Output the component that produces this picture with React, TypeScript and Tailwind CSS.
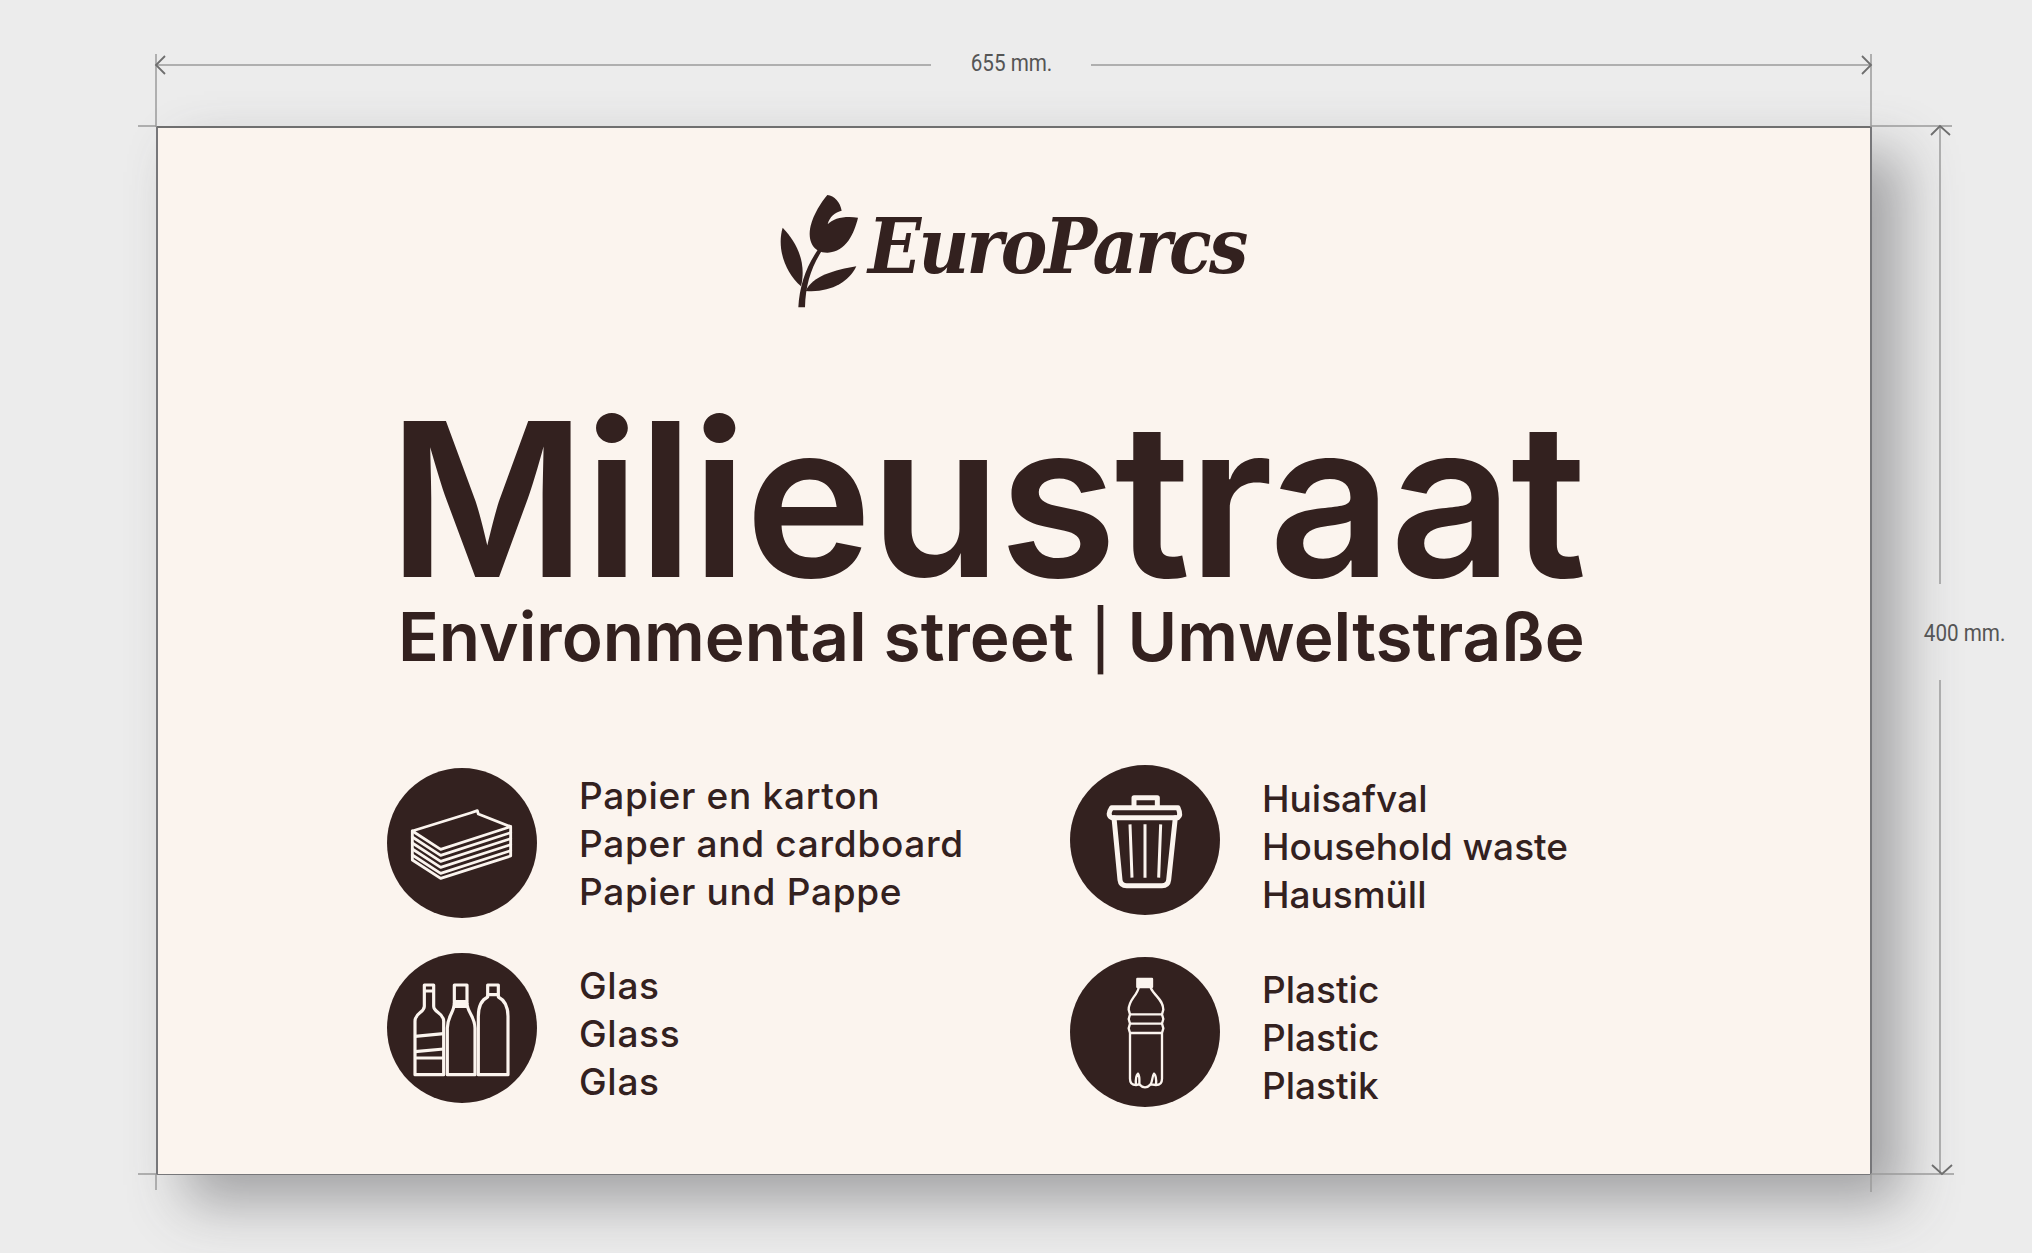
const cream = "#fbf4ee";

function PaperIcon() {
	return (
		<svg viewBox="0 0 450 450" className="h-full w-full" fill="none" stroke={cream} strokeWidth="8.5" strokeLinejoin="round" strokeLinecap="round">
			<path d="M76 189 L250 135 L271 128 L274 138 L371 176 L161 244 Z" />
			<path d="M76 189 V276 L161 331 L371 264 V176" />
			<path d="M76 207 L161 262 L371 194" />
			<path d="M76 225 L161 280 L371 212" />
			<path d="M76 243 L161 298 L371 230" />
			<path d="M76 261 L161 316 L371 248" />
		</svg>
	);
}

function GlassIcon() {
	return (
		<svg viewBox="0 0 450 450" className="h-full w-full" fill="none" stroke={cream} strokeWidth="9.5" strokeLinejoin="round">
			<path d="M112 96 H140 V114 H112 Z M112 114 V160 C112 180 84 178 84 205 V365 H170 V205 C170 178 140 180 140 160 V114" />
			<path d="M84 250 L170 242 M84 296 L170 288 M84 315 H170" />
			<path d="M202 96 H240 V150 H202 Z" />
			<path d="M204 146 H238 V160 H204 Z" fill={cream} />
			<path d="M202 150 C202 178 181 190 181 225 V365 H264 V225 C264 190 240 178 240 150" />
			<path d="M302 96 H334 V125 H302 Z" />
			<path d="M302 125 V132 C285 140 274 155 274 190 V365 H363 V190 C363 155 350 140 334 132 V125" />
		</svg>
	);
}

function TrashIcon() {
	return (
		<svg viewBox="0 0 450 450" className="h-full w-full" fill="none" stroke={cream} strokeLinejoin="round" strokeLinecap="round">
			<path d="M132 158 L150 345 Q152 362 170 362 H276 Q294 362 296 345 L316 158" strokeWidth="15" />
			<path d="M125 128 H324 Q334 150 324 158 H125 Q110 150 125 128 Z" strokeWidth="15" />
			<path d="M192 122 V98 H262 V122" strokeWidth="15" />
			<path d="M180 178 L186 338 M225 178 V338 M272 178 L266 338" strokeWidth="9" strokeLinecap="butt" />
		</svg>
	);
}

function BottleIcon() {
	return (
		<svg viewBox="0 0 450 450" className="h-full w-full" fill="none" stroke={cream} strokeWidth="7" strokeLinejoin="round">
			<path d="M202 66 H246 V90 H202 Z" fill={cream} />
			<path d="M206 92 C200 118 176 128 176 158 L180 172 L176 186 L180 200 L176 214 L180 228 V365 Q180 384 198 384 L208 382 Q225 400 242 382 L258 384 Q276 384 276 365 V228 L280 214 L276 200 L280 186 L276 172 L280 158 C280 128 254 118 242 92" />
			<path d="M178 172 H278 M178 200 H278 M180 228 H276" />
			<path d="M198 384 C196 365 200 354 204 350 C210 358 208 372 208 382 M258 384 C260 365 256 354 252 350 C246 358 248 372 242 382" />
		</svg>
	);
}

function Tulip() {
	return (
		<svg viewBox="110 75 240 345" className="h-[115px] w-[80px]" fill="#33211f">
			<path d="M255 78 C276 80 294 100 298 125 C278 130 262 142 256 166 C272 147 310 140 347 146 C336 192 312 248 256 251 C214 252 194 216 205 170 C214 136 236 100 255 78 Z" />
			<path d="M168 415 C172 350 190 295 228 240 L238 246 C204 300 190 350 188 415 Z" />
			<path d="M121 176 C168 225 192 285 176 352 C130 312 102 240 121 176 Z" />
			<path d="M342 292 C320 340 262 372 190 366 C210 322 278 302 342 292 Z" />
		</svg>
	);
}

function Item({ icon, lines, textClass }: { icon: React.ReactNode; lines: string[]; textClass: string }) {
	return (
		<div className="flex items-start">
			<div className="h-[150px] w-[150px] shrink-0 rounded-full bg-[#33211f]">{icon}</div>
			<div className={`ml-[42px] text-[37px] font-medium leading-[48px] whitespace-nowrap ${textClass}`}>
				{lines.map((l, i) => (
					<div key={i}>{l}</div>
				))}
			</div>
		</div>
	);
}

function DimensionLines() {
	return (
		<svg className="absolute inset-0 h-[1253px] w-[2032px]" viewBox="0 0 2032 1253" fill="none">
			<g stroke="#9a9a9a" strokeWidth="1.5">
				{/* width */}
				<path d="M156 65 H931 M1091 65 H1871" />
				<path d="M156 54 V127 M1871 54 V127 M156 1174 V1190 M1871 1174 V1192" />
				{/* height */}
				<path d="M138 126 H156 M1871 126 H1952 M138 1174 H156 M1871 1174 H1954" />
				<path d="M1940 127 V584 M1940 680 V1174" />
			</g>
			<g stroke="#6e6e6e" strokeWidth="1.8">
				<path d="M165 56 L156 65 L165 74 M1862 56 L1871 65 L1862 74" />
				<path d="M1931 135 L1940 126 L1950 135 M1932 1165 L1942 1174 L1952 1165" />
			</g>
		</svg>
	);
}

export default function App() {
	return (
		<div className="relative h-[1253px] w-[2032px] overflow-hidden bg-[#ececec] pl-[156px] pt-[126px] text-[#33211f] font-['Inter',sans-serif]">
			{/* sign */}
			<div className="flex h-[1049px] w-[1716px] flex-col border-x-2 border-t-2 border-b border-x-[#77777a] border-t-[#6f6f6f] border-b-[#77777a] bg-[#fbf4ee] shadow-[30px_28px_52px_rgba(70,70,75,0.44)]">
				<div className="ml-[621px] mt-[66px] flex h-[116px] items-start">
					<Tulip />
					<div className="ml-[9px] mt-[8px] origin-left scale-x-[0.92] text-[76px] leading-[90px] font-bold italic tracking-[-3px] whitespace-nowrap font-['DejaVu_Serif',serif]">
						EuroParcs
					</div>
				</div>
				<div className="ml-[230px] mt-[91px] text-[215px] leading-[196px] font-semibold tracking-[-2.5px] whitespace-nowrap">Milieustraat</div>
				<div className="ml-[240px] text-[67.5px] leading-[80px] font-semibold whitespace-nowrap">
					Environmental street <span className="text-[58px] font-medium">|</span> Umweltstraße
				</div>
				<div className="mt-[88px] flex pl-[229px]">
					<div className="flex w-[683px] flex-col gap-[35px]">
						<Item icon={<PaperIcon />} lines={["Papier en karton", "Paper and cardboard", "Papier und Pappe"]} textClass="pt-[4px] tracking-[0.7px]" />
						<Item icon={<GlassIcon />} lines={["Glas", "Glass", "Glas"]} textClass="pt-[9px] tracking-[0.7px]" />
					</div>
					<div className="mt-[-3px] flex flex-col gap-[38px]">
						<Item icon={<TrashIcon />} lines={["Huisafval", "Household waste", "Hausmüll"]} textClass="pt-[10px]" />
						<Item icon={<BottleIcon />} lines={["Plastic", "Plastic", "Plastik"]} textClass="pt-[9px]" />
					</div>
				</div>
			</div>
			<DimensionLines />
			<div className="absolute left-[965px] top-[49px] w-[82px] scale-x-[0.86] text-center text-[24px] leading-[28px] text-[#555555] whitespace-nowrap font-['Roboto',sans-serif]">655 mm.</div>
			<div className="absolute left-[1918px] top-[619px] w-[83px] scale-x-[0.86] text-center text-[24px] leading-[28px] text-[#555555] whitespace-nowrap font-['Roboto',sans-serif]">400 mm.</div>
		</div>
	);
}
